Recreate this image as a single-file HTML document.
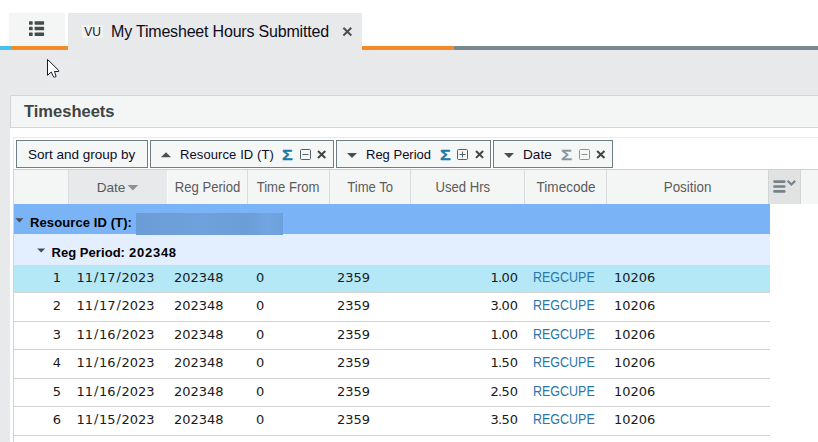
<!DOCTYPE html>
<html lang="en">
<head>
<meta charset="utf-8">
<title>My Timesheet Hours Submitted</title>
<style>
html,body{margin:0;padding:0;}
body{width:818px;height:442px;overflow:hidden;background:#fff;position:relative;font-family:"Liberation Sans",sans-serif;color:#1a1a1a;}
.abs{position:absolute;}
#page{position:absolute;left:0;top:0;width:818px;height:442px;overflow:hidden;background:#fff;}
#graybg{left:0;top:50px;width:818px;height:392px;background:#e8e9ea;}
#tab1{left:9px;top:13px;width:56px;height:33px;background:#f4f6f6;}
#tab2{left:68px;top:13px;width:294px;height:38px;background:#e8e9ea;}
.bar{top:46px;height:4px;}
#tabtitle{left:111px;top:22px;font-size:16px;line-height:19px;color:#0c0c1c;white-space:nowrap;letter-spacing:-0.19px;}
#vu{left:82px;top:25px;width:21px;height:13px;background:#f1f2f2;font-size:12px;line-height:14px;text-align:center;color:#15152a;}
#panel{left:10px;top:95px;width:820px;height:360px;background:#fff;}
#phead{left:0;top:0;width:820px;height:33px;background:#f4f6f6;border:1px solid #d3d6d8;box-sizing:border-box;}
#ptitle{left:14px;top:6px;font-size:16.5px;line-height:20px;font-weight:bold;color:#404444;white-space:nowrap;}
#inner{left:13px;top:137px;width:820px;height:320px;border:1px solid #ece8e8;box-sizing:border-box;background:#fff;}
.btn{top:140px;height:28px;box-sizing:border-box;border:1px solid #6f7d85;background:#f5f7f7;font-size:13px;line-height:27px;white-space:nowrap;color:#0c0c1e;}
.btn span{position:absolute;top:0;}
.btn .sg{color:#1c7aa8;font-weight:bold;font-size:15px;transform:scale(1.2,1.03);transform-origin:0 50%;top:-0.5px;margin-left:0.9px;-webkit-text-stroke:0.25px #1c7aa8}
.btn .sg.off{color:#89939a;font-weight:normal;-webkit-text-stroke:0.5px #89939a}
#hdr{left:14px;top:169px;width:804px;height:35px;background:#f4f6f6;border-top:1px solid #cdd1d4;box-sizing:border-box;}
.hc{top:170px;height:34px;box-sizing:border-box;border-right:1px solid #d9dcde;font-size:13px;line-height:34px;color:#5a5a5a;text-align:center;white-space:nowrap;}
.hc .t{display:inline-block;position:relative;font-size:13.8px;transform:scaleX(0.95);line-height:34px;top:1px}
.grow1{left:14px;top:204px;width:756px;height:30px;background:#7ab4f6;}
.grow2{left:14px;top:234px;width:756px;height:31px;background:#e3efff;}
.row{left:14px;width:756px;border-bottom:1px solid #d5d2d2;box-sizing:border-box;font-family:"DejaVu Sans","Liberation Sans",sans-serif;font-size:13px;color:#1a1a1a;}
.row span{position:absolute;white-space:nowrap;line-height:16px;}
.row i{font-style:normal;display:inline-block;width:5.9px;text-align:center;position:relative;top:-1.2px;left:0.3px}
.row u{text-decoration:none;margin:0 -0.7px;}
.row .tc{font-family:"Liberation Sans",sans-serif;color:#2876aa;font-size:13.8px;transform:scaleX(0.905);transform-origin:0 50%;}
</style>
</head>
<body>
<div id="page">
  <div id="graybg" class="abs"></div>
  <div id="tab1" class="abs">
    <svg class="abs" style="left:20px;top:8px" width="16" height="16" viewBox="0 0 16 16">
      <g fill="#454b4b">
        <rect x="0" y="0.2" width="3.7" height="3.5" rx="0.6"/><rect x="5.6" y="0.2" width="9.5" height="3.5" rx="0.6"/>
        <rect x="0" y="5.8" width="3.7" height="3.5" rx="0.6"/><rect x="5.6" y="5.8" width="9.5" height="3.5" rx="0.6"/>
        <rect x="0" y="11.4" width="3.7" height="3.5" rx="0.6"/><rect x="5.6" y="11.4" width="9.5" height="3.5" rx="0.6"/>
      </g>
    </svg>
  </div>
  <div class="abs bar" style="left:0;width:11px;background:#45c2ee"></div>
  <div class="abs bar" style="left:11px;width:57px;background:#f58a28"></div>
  <div class="abs bar" style="left:362px;width:92px;background:#f58a28"></div>
  <div class="abs bar" style="left:454px;width:364px;background:#7a878f"></div>
  <div id="tab2" class="abs"></div>
  <div id="vu" class="abs">VU</div>
  <div id="tabtitle" class="abs">My Timesheet Hours Submitted</div>
  <svg class="abs" style="left:342px;top:27px" width="11" height="10" viewBox="0 0 11 10"><path d="M1.4 0.8 L9.3 8.5 M9.3 0.8 L1.4 8.5" stroke="#484d50" stroke-width="1.9" fill="none"/></svg>
  <div class="abs" style="left:47px;top:59px;width:32px;height:32px;background:#e9eaeb"></div>
  <!-- cursor -->
  <svg class="abs" style="left:46px;top:58px" width="14" height="21" viewBox="0 0 14 21"><path d="M1.5 1.4 L1.5 17.3 L5.3 14 L7.5 18.9 Q8.8 19.6 10.1 18.5 L8.5 13.5 L12.6 13.5 L12.7 12.4 Z" fill="#fff" stroke="#1a1a2a" stroke-width="1" stroke-linejoin="round"/></svg>

  <div id="panel" class="abs">
    <div id="phead" class="abs"></div>
    <div id="ptitle" class="abs">Timesheets</div>
  </div>
  <div id="inner" class="abs"></div>
  <div class="abs" style="left:13px;top:169px;width:1px;height:280px;background:#d1d4d7"></div>

  <div class="abs btn" style="left:16px;width:132px;"><span style="left:11px;font-size:13.5px">Sort and group by</span></div>
  <div class="abs btn" style="left:150px;width:184px;">
    <svg class="abs" style="left:10px;top:11px" width="10" height="6" viewBox="0 0 10 6"><path d="M0 5.2 L5 0.2 L10 5.2 Z" fill="#4d4d4d"/></svg>
    <span style="left:29px;letter-spacing:0.1px">Resource ID (T)</span>
    <span class="sg" style="left:129.8px;">Σ</span>
    <svg class="abs" style="left:149px;top:8px" width="12" height="12" viewBox="0 0 12 12"><rect x="0.5" y="0.5" width="10" height="10" rx="1" fill="none" stroke="#52626e" stroke-width="1"/><path d="M2.5 5.5 H8.5" stroke="#52626e" stroke-width="1"/></svg>
    <svg class="abs" style="left:166px;top:9px" width="10" height="10" viewBox="0 0 10 10"><path d="M1.0 1 L8.3 7.9 M8.3 1 L1.0 7.9" stroke="#444" stroke-width="2" fill="none"/></svg>
  </div>
  <div class="abs btn" style="left:336px;width:155px;">
    <svg class="abs" style="left:10px;top:11px" width="10" height="6" viewBox="0 0 10 6"><path d="M0 1 L5 6 L10 1 Z" fill="#4d4d4d"/></svg>
    <span style="left:29px">Reg Period</span>
    <span class="sg" style="left:102px;">Σ</span>
    <svg class="abs" style="left:120px;top:8px" width="12" height="12" viewBox="0 0 12 12"><rect x="0.5" y="0.5" width="10" height="10" rx="1" fill="none" stroke="#52626e" stroke-width="1"/><path d="M2.5 5.5 H8.5 M5.5 2.5 V8.5" stroke="#52626e" stroke-width="1"/></svg>
    <svg class="abs" style="left:137px;top:9px" width="11" height="10" viewBox="0 0 11 10"><path d="M2.0 1 L9.1 7.9 M9.1 1 L2.0 7.9" stroke="#444" stroke-width="2" fill="none"/></svg>
  </div>
  <div class="abs btn" style="left:493px;width:120px;">
    <svg class="abs" style="left:10px;top:11px" width="10" height="6" viewBox="0 0 10 6"><path d="M0 1 L5 6 L10 1 Z" fill="#4d4d4d"/></svg>
    <span style="left:29px;font-size:13.6px">Date</span>
    <span class="sg off" style="left:66px;">Σ</span>
    <svg class="abs" style="left:85px;top:8px" width="12" height="12" viewBox="0 0 12 12"><rect x="0.5" y="0.5" width="10" height="10" rx="1" fill="none" stroke="#8a9499" stroke-width="1"/><path d="M2.5 5.5 H8.5" stroke="#8a9499" stroke-width="1"/></svg>
    <svg class="abs" style="left:102px;top:9px" width="10" height="10" viewBox="0 0 10 10"><path d="M1.1 1 L8.5 7.9 M8.5 1 L1.1 7.9" stroke="#444" stroke-width="2" fill="none"/></svg>
  </div>

  <div id="hdr" class="abs"></div>
  <div class="abs hc" style="left:14px;width:55px;"></div>
  <div class="abs hc" style="left:69px;width:99px;background:#e8e9ea;border-right-color:#f9fafa"><span class="t" style="left:-7px;transform:none;font-size:13.6px">Date</span>
    <svg class="abs" style="left:58px;top:15px" width="12" height="6" viewBox="0 0 12 6"><path d="M0.6 0 L11.2 0 L5.9 5.6 Z" fill="#8a9297"/></svg>
  </div>
  <div class="abs hc" style="left:168px;width:80px;"><span class="t">Reg Period</span></div>
  <div class="abs hc" style="left:248px;width:82px;"><span class="t">Time From</span></div>
  <div class="abs hc" style="left:330px;width:81px;"><span class="t">Time To</span></div>
  <div class="abs hc" style="left:411px;width:114px;"><span class="t" style="left:-5px">Used Hrs</span></div>
  <div class="abs hc" style="left:525px;width:82px;"><span class="t" style="transform:scaleX(0.98);left:0.9px">Timecode</span></div>
  <div class="abs hc" style="left:607px;width:161px;border-right:none"><span class="t" style="transform:scaleX(0.97)">Position</span></div>
  <div class="abs hc" style="left:768px;width:33px;background:#e1e3e3;border-left:1px solid #d2d5d6;border-right:1px solid #d2d5d6;">
    <svg class="abs" style="left:4px;top:9px" width="25" height="15" viewBox="0 0 25 15"><g stroke="#75818b" stroke-width="2.7" stroke-linecap="round" fill="none"><path d="M1.5 2.6 H11.3 M1.5 7.5 H11.3 M1.5 12.4 H11.3"/></g><path d="M14.6 1.8 L18.4 5.5 L22.2 1.8" stroke="#75818b" stroke-width="2.1" fill="none"/></svg>
  </div>

  <div class="abs grow1">
    <svg class="abs" style="left:1px;top:14px" width="9" height="5" viewBox="0 0 9 5"><path d="M0.4 0.2 L8.4 0.2 L4.4 4.4 Z" fill="#4a4a4a"/></svg>
    <span class="abs" style="left:16px;top:11px;font-size:13px;font-weight:bold;line-height:16px;color:#000;white-space:nowrap;letter-spacing:0.1px">Resource ID (T):</span>
    <div class="abs" style="left:122px;top:9px;width:147px;height:22px;z-index:2;background:linear-gradient(90deg,#6b9cd6 0%,#6fa1dc 45%,#6b9dd7 75%,#71a5e1 90%,#6ea1dc 100%);"></div>
  </div>
  <div class="abs grow2">
    <svg class="abs" style="left:23px;top:14px" width="9" height="5" viewBox="0 0 9 5"><path d="M0.2 0.4 L8.2 0.4 L4.2 4.6 Z" fill="#4a4a4a"/></svg>
    <span class="abs" style="left:37.5px;top:11px;font-size:13px;font-weight:bold;line-height:16px;color:#000;white-space:nowrap;letter-spacing:0.05px">Reg Period: <b style="letter-spacing:0.75px;margin-left:0.3px">202348</b></span>
  </div>

  <div class="abs row" style="top:265px;height:28px;background:#b5e8f7"><span style="right:709px;top:5px">1</span><span style="left:62.5px;top:5px">11<i>/</i>17<i>/</i>2023</span><span style="left:160px;top:5px">202348</span><span style="left:242px;top:5px">0</span><span style="left:323px;top:5px">2359</span><span style="right:252px;top:5px">1<u>.</u>00</span><span class="tc" style="left:519px;top:5px">REGCUPE</span><span style="left:600px;top:5px">10206</span></div>
  <div class="abs row" style="top:293px;height:29px;"><span style="right:709px;top:5px">2</span><span style="left:62.5px;top:5px">11<i>/</i>17<i>/</i>2023</span><span style="left:160px;top:5px">202348</span><span style="left:242px;top:5px">0</span><span style="left:323px;top:5px">2359</span><span style="right:252px;top:5px">3<u>.</u>00</span><span class="tc" style="left:519px;top:5px">REGCUPE</span><span style="left:600px;top:5px">10206</span></div>
  <div class="abs row" style="top:322px;height:28px;"><span style="right:709px;top:5px">3</span><span style="left:62.5px;top:5px">11<i>/</i>16<i>/</i>2023</span><span style="left:160px;top:5px">202348</span><span style="left:242px;top:5px">0</span><span style="left:323px;top:5px">2359</span><span style="right:252px;top:5px">1<u>.</u>00</span><span class="tc" style="left:519px;top:5px">REGCUPE</span><span style="left:600px;top:5px">10206</span></div>
  <div class="abs row" style="top:350px;height:29px;"><span style="right:709px;top:5px">4</span><span style="left:62.5px;top:5px">11<i>/</i>16<i>/</i>2023</span><span style="left:160px;top:5px">202348</span><span style="left:242px;top:5px">0</span><span style="left:323px;top:5px">2359</span><span style="right:252px;top:5px">1<u>.</u>50</span><span class="tc" style="left:519px;top:5px">REGCUPE</span><span style="left:600px;top:5px">10206</span></div>
  <div class="abs row" style="top:379px;height:28px;"><span style="right:709px;top:5px">5</span><span style="left:62.5px;top:5px">11<i>/</i>16<i>/</i>2023</span><span style="left:160px;top:5px">202348</span><span style="left:242px;top:5px">0</span><span style="left:323px;top:5px">2359</span><span style="right:252px;top:5px">2<u>.</u>50</span><span class="tc" style="left:519px;top:5px">REGCUPE</span><span style="left:600px;top:5px">10206</span></div>
  <div class="abs row" style="top:407px;height:29px;"><span style="right:709px;top:5px">6</span><span style="left:62.5px;top:5px">11<i>/</i>15<i>/</i>2023</span><span style="left:160px;top:5px">202348</span><span style="left:242px;top:5px">0</span><span style="left:323px;top:5px">2359</span><span style="right:252px;top:5px">3<u>.</u>50</span><span class="tc" style="left:519px;top:5px">REGCUPE</span><span style="left:600px;top:5px">10206</span></div>
</div>
</body>
</html>
